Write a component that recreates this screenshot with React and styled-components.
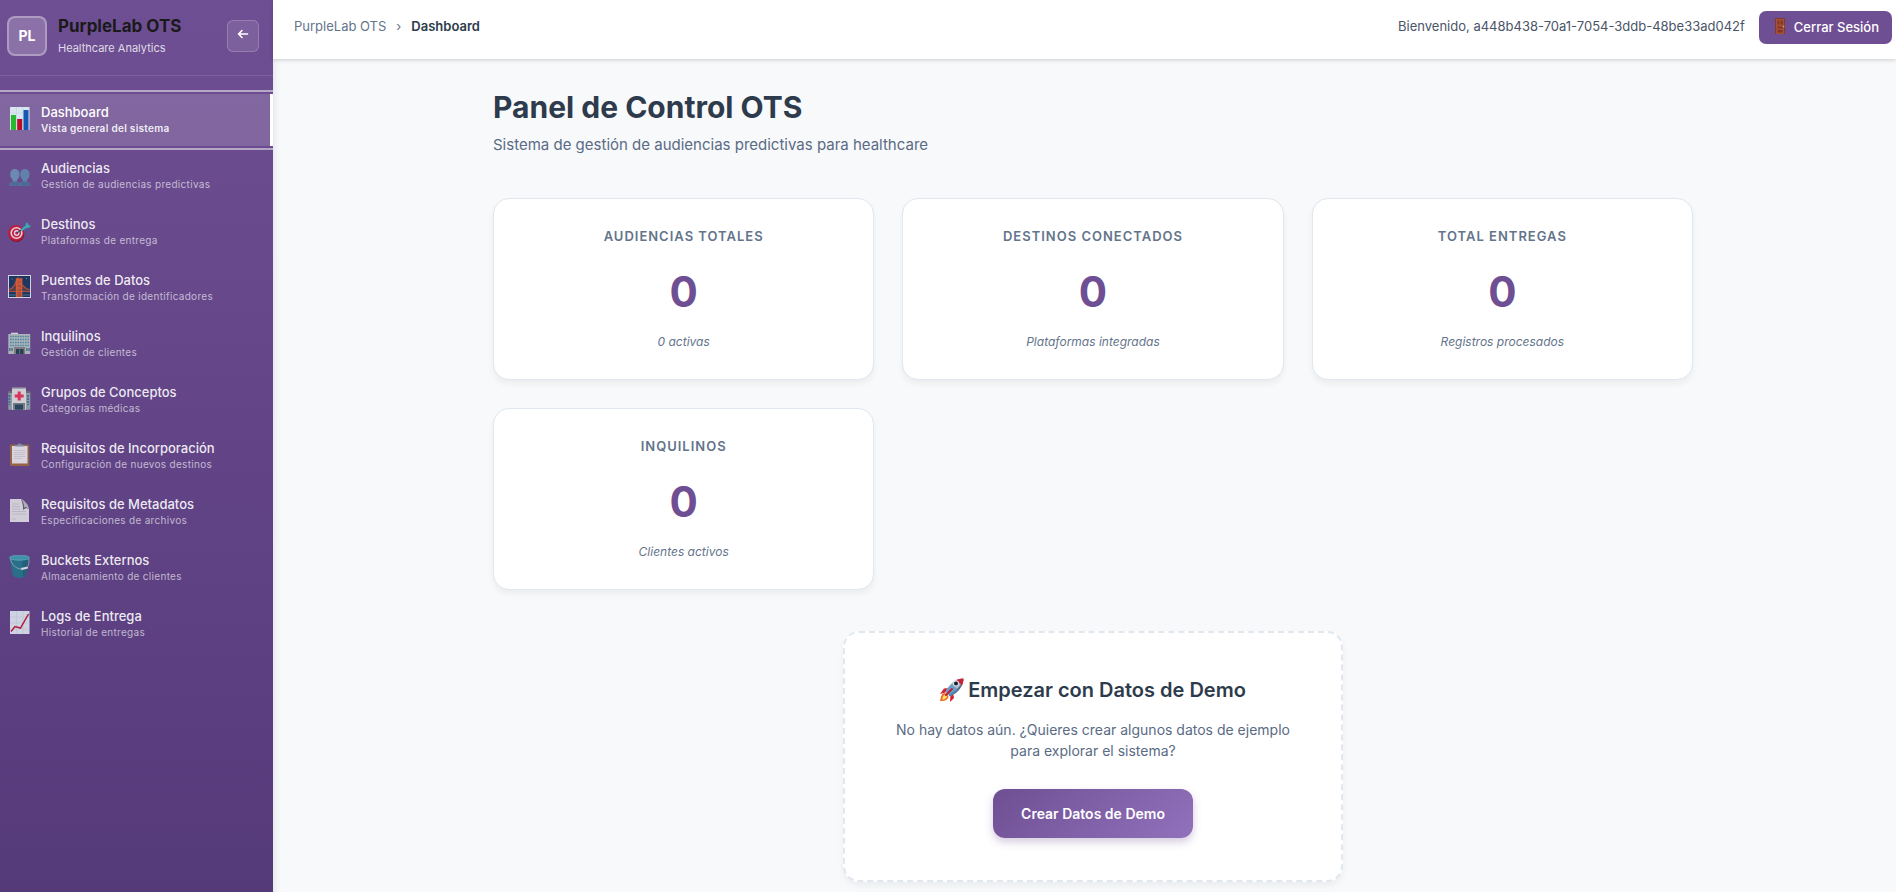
import React from 'react';
import styled, { createGlobalStyle, css } from 'styled-components';

const GlobalStyle = createGlobalStyle`
  *, *::before, *::after { box-sizing: border-box; }
  body {
    margin: 0;
    background: #f8f9fb;
    color: #2d3b4c;
    font-family: Inter, "Liberation Sans", sans-serif;
    font-size: 14px;
    line-height: 20px;
  }
  h1, h2, h3, p, ul, ol { margin: 0; padding: 0; }
  ul, ol { list-style: none; }
  button { font-family: inherit; cursor: pointer; }
`;

const Layout = styled.div`
  display: flex;
  min-height: 100vh;
`;

const Sidebar = styled.aside`
  display: flex;
  flex-direction: column;
  flex: 0 0 273px;
  overflow: hidden;
  background: linear-gradient(180deg, #6f4f93 0%, #553a7a 100%);
  color: #fff;
`;

const SidebarHeader = styled.div`
  display: flex;
  align-items: center;
  height: 76px;
  padding: 0 14px 4px 7px;
  border-bottom: 1px solid rgba(255, 255, 255, 0.12);
`;

const Logo = styled.div`
  display: grid;
  place-items: center;
  width: 40px;
  height: 40px;
  border: 2px solid rgba(255, 255, 255, 0.3);
  border-radius: 8px;
  background: rgba(255, 255, 255, 0.2);
  font-weight: 700;
`;

const Brand = styled.div`
  flex: 1;
  padding-left: 11px;
`;

const BrandName = styled.h2`
  color: #1a1a1a;
  font-size: 17px;
  font-weight: 700;
  line-height: 24px;
`;

const BrandTagline = styled.p`
  color: rgba(255, 255, 255, 0.8);
  font-size: 11px;
  line-height: 20px;
`;

const CollapseButton = styled.button`
  display: grid;
  place-items: center;
  width: 32px;
  height: 32px;
  padding: 0 0 3px;
  border: 1px solid rgba(255, 255, 255, 0.2);
  border-radius: 6px;
  background: rgba(255, 255, 255, 0.1);
  color: #fff;
`;

const NavList = styled.ul`
  display: flex;
  flex-direction: column;
  gap: 4px;
  padding-top: 18px;
`;

const NavLink = styled.a`
  display: flex;
  align-items: center;
  gap: 10px;
  height: 52px;
  padding-left: 7px;
  border-right: 3px solid transparent;
  color: rgba(255, 255, 255, 0.9);
  text-decoration: none;
  ${({ $active }) => $active && css`
    border-right-color: #fff;
    background: rgba(255, 255, 255, 0.15);
    color: #fff;
    outline: 2px solid rgba(255, 255, 255, 0.5);
    outline-offset: 2px;
  `}
`;

const NavIcon = styled.svg`
  flex: none;
  width: 24px;
  height: 26px;
  opacity: ${({ $active }) => ($active ? 1 : 0.9)};
`;

const NavText = styled.span`
  display: flex;
  flex-direction: column;
`;

const NavTitle = styled.span`
  font-size: 13px;
  font-weight: 500;
  line-height: 17px;
`;

const NavHint = styled.span`
  color: ${({ $active }) => ($active ? 'rgba(255, 255, 255, 0.9)' : 'rgba(255, 255, 255, 0.63)')};
  font-size: 10px;
  font-weight: ${({ $active }) => ($active ? 600 : 400)};
  letter-spacing: 0.3px;
  line-height: 15px;
`;

const Page = styled.div`
  display: flex;
  flex: 1;
  flex-direction: column;
  min-width: 0;
  box-shadow: inset 8px 0 8px -8px rgba(45, 55, 72, 0.15);
`;

const TopBar = styled.header`
  display: flex;
  align-items: flex-start;
  justify-content: space-between;
  padding: 11px 4px 15px 21px;
  background: #fff;
  box-shadow: 0 1px 4px rgba(0, 0, 0, 0.18);
  font-size: 13px;
  line-height: 31px;
`;

const Breadcrumb = styled.ol`
  display: flex;
  gap: 10px;
  color: #64748b;
`;

const CrumbLink = styled.a`
  color: inherit;
  text-decoration: none;
`;

const CurrentCrumb = styled.span`
  color: #2d3b4c;
  font-weight: 600;
`;

const UserArea = styled.div`
  display: flex;
  align-items: flex-start;
  gap: 14px;
  color: #4a5568;
`;

const LogoutButton = styled.button`
  display: flex;
  align-items: center;
  gap: 6px;
  height: 33px;
  padding: 0 13px 2px;
  border: 0;
  border-radius: 7px;
  background: #6f4f93;
  color: #fff;
  font-size: 13px;
  font-weight: 500;
`;

const Content = styled.main`
  padding: 28px 0 7px 17px;
`;

const Container = styled.div`
  max-width: 1200px;
  margin: 0 auto;
`;

const PageTitle = styled.h1`
  font-size: 30px;
  font-weight: 700;
  line-height: 40px;
`;

const PageSubtitle = styled.p`
  margin-top: 7px;
  color: #5a6b85;
  font-size: 15px;
  line-height: 22px;
`;

const StatGrid = styled.div`
  display: grid;
  grid-template-columns: repeat(auto-fit, minmax(300px, 1fr));
  gap: 28px;
  margin-top: 42px;
`;

const cardShadow = css`
  box-shadow: 0 4px 6px rgba(0, 0, 0, 0.05);
`;

const StatCard = styled.section`
  display: flex;
  flex-direction: column;
  align-items: center;
  padding: 28px;
  border: 1px solid #e0e7ef;
  border-radius: 16px;
  background: #fff;
  ${cardShadow}
`;

const StatLabel = styled.h3`
  color: #64748b;
  font-size: 13px;
  font-weight: 600;
  letter-spacing: 1px;
  line-height: 18px;
  text-transform: uppercase;
`;

const StatValue = styled.p`
  margin-top: 14px;
  color: #6f4f93;
  font-size: 42px;
  font-weight: 700;
  line-height: 66px;
`;

const StatNote = styled.p`
  margin-top: 8px;
  color: #64748b;
  font-size: 12px;
  font-style: italic;
  line-height: 18px;
`;

const DemoCard = styled.section`
  display: flex;
  flex-direction: column;
  align-items: center;
  max-width: 500px;
  margin: 41px auto 0;
  padding: 42px 40px;
  border: 2px dashed #e0e7ef;
  border-radius: 16px;
  background: #fff;
  text-align: center;
  ${cardShadow}
`;

const DemoTitle = styled.h2`
  display: flex;
  align-items: center;
  gap: 4px;
  font-size: 20px;
  font-weight: 600;
  line-height: 30px;
`;

const DemoText = styled.p`
  max-width: 400px;
  margin: 14px 0 28px;
  color: #5a6b85;
  line-height: 21px;
`;

const DemoButton = styled.button`
  height: 49px;
  padding: 0 28px;
  border: 0;
  border-radius: 12px;
  background: linear-gradient(135deg, #6f4f93 0%, #9171bb 100%);
  box-shadow: 0 4px 8px rgba(111, 79, 147, 0.3);
  color: #fff;
  font-size: 14px;
  font-weight: 600;
`;

const drawings = {
  bars: (
    <>
      <rect x="3" width="19.5" height="23" fill="#d9e6f0" />
      <path d="M3.4 6h18.6M3.4 12h18.6M3.4 18h18.6M9.5 0v23M16 0v23" stroke="#bccddd" strokeWidth=".5" />
      <rect x="4" y="8" width="5" height="15" fill="#27b832" />
      <rect x="10.2" y="12" width="5" height="11" fill="#b90f26" />
      <rect x="16.5" y="3" width="5" height="20" fill="#1457b4" />
    </>
  ),
  people: (
    <>
      <path d="M17.800 6c3 0 4.700 2.300 4.700 5.200 0 2.500-1.200 4.500-2.500 5.800v1.500c1.200 1 3.500 1 3.500 4.200H12.500c0-3.200 2.300-3.200 3.300-4.200V17c-1.400-1.300-2.600-3.300-2.600-5.800C13.200 8.300 14.800 6 17.800 6z" fill="#5f88ae" />
      <path d="M7.800 6c3 0 4.700 2.300 4.700 5.200 0 2.500-1.200 4.500-2.500 5.800v1.500c1.200 1 3.500 1 3.500 4.200H2c0-3.200 2.800-3.200 3.800-4.200V17c-1.400-1.300-2.600-3.300-2.600-5.800C3.200 8.300 4.800 6 7.800 6z" fill="#6a91b5" />
      <path d="M2 22.700c0-3.200 2.800-3.200 3.800-4.200h4.200c1.200 1 3.500 1 3.500 4.200zM14 22.700c0-2-.5-2.700 1.800-4.200H20c1.200 1 3.500 1 3.500 4.200z" fill="#43658c" opacity=".75" />
    </>
  ),
  target: (
    <>
      <ellipse cx="9.5" cy="15" rx="7.8" ry="8" fill="#8e0e25" />
      <circle cx="9" cy="14" r="7.9" fill="#ca1835" />
      <circle cx="9.5" cy="14" r="5.300" fill="none" stroke="#f3dfe6" strokeWidth="1.6" />
      <circle cx="9.7" cy="14" r="2.200" fill="none" stroke="#f3dfe6" strokeWidth="1.400" />
      <path d="M10 14l8-6" stroke="#234b6b" strokeWidth="1.2" />
      <path d="M13.5 10.5l5-4 .7-3.2 2 1.500.5 1.500 2.800.4-3 2.400-2.500.2-4.200 3.200z" fill="#35b4b7" />
    </>
  ),
  bridge: (
    <>
      <rect x="1.500" y=".5" width="22" height="22" fill="#17365c" stroke="#d9e1e9" />
      <circle cx="5" cy="4" r=".4" fill="#fff" /><circle cx="19.5" cy="3.5" r=".4" fill="#fff" /><circle cx="8" cy="6.5" r=".3" fill="#fff" />
      <path d="M2 15C7 13 9 8 11 3c2 6 5 10 12 12M2 16.500h21" fill="none" stroke="#bd5435" strokeWidth="1.200" />
      <path d="M4 14v3M6 12.500v4M8 10v7M17 11v6M19 13v4M21 14.500v3" stroke="#aa4b34" strokeWidth=".8" />
      <path d="M9.500 22V4h1.600v18M13 22V4h1.700v18M9.500 5h5M9.500 9h5M9.500 13h5" fill="none" stroke="#e15c2f" strokeWidth="1.400" />
      <path d="M2 20h7M16 20h7" stroke="#366382" strokeWidth="1.600" />
    </>
  ),
  office: (
    <>
      <path d="M4 1.700h7v1.500H4z" fill="#dce0df" />
      <path d="M1.300 3h21.900v20H1.300z" fill="#b3bfbf" />
      <path d="M3 5.500h19M3 8.500h19M3 11.500h19M3 14.500h19" stroke="#4f90a6" strokeWidth="1.700" strokeDasharray="1.700 .8" />
      <path d="M2 18.500h4M19 18.500h4" stroke="#45798d" strokeWidth="3" strokeDasharray="1.500 .8" />
      <path d="M7 16h11v7H7z" fill="#81827d" /><path d="M9 18h7.500v5H9z" fill="#263d4c" />
      <path d="M12.700 18v5" stroke="#5a9cb3" strokeWidth=".7" />
    </>
  ),
  hospital: (
    <>
      <path d="M1.300 5h22v17.700h-22z" fill="#90a4a9" /><path d="M1.300 4h4v2h-4M19 4h4v2h-4" fill="#6d6d70" />
      <path d="M5 .8h14v22H5z" fill="#dbdddd" /><path d="M5 .5h14v1.200H5z" fill="#969899" />
      <path d="M2.500 8v10M21 8v10" stroke="#3a7489" strokeWidth="1.800" strokeDasharray="2 1" />
      <path d="M10.700 4.500h3v3h3v3h-3v3h-3v-3h-3v-3h3z" fill="#e7335a" />
      <path d="M6 16h12v6.700H6z" fill="#777f83" /><path d="M8 17.500h8v5.200H8z" fill="#25485c" />
    </>
  ),
  clipboard: (
    <>
      <rect x="3" y="1.500" width="19.300" height="21.500" rx="1" fill="#9b673e" />
      <path d="M5 3h15.500v17.500H5z" fill="#e7e4e8" />
      <path d="M7 7.500h11M7 9.500h11M7 11.500h11M7 13.500h11M7 15.500h8" stroke="#cac7d0" strokeWidth=".8" />
      <path d="M8 3.500V2h2.500C11 0 14.500 0 15 2h2.500v1.500z" fill="#8793a5" />
    </>
  ),
  page: (
    <>
      <path d="M3 0h11l8 10v13H3z" fill="#dedce1" />
      <path d="M14 0l8 10c-2-1-4-1-6 1 .5-3-.5-7-2-11z" fill="#55525b" />
      <path d="M14 0c3 1 8 6 8 10-2-2-4-2-5-1.500C17 5 16 2 14 0z" fill="#bab7bf" />
      <path d="M5 5h7M5 7.500h8M5 10h8M5 12.500h14M5 15h14M5 20h4" stroke="#bfbcc5" strokeWidth=".8" />
    </>
  ),
  bucket: (
    <>
      <path d="M2.500 2.500h20l-3 17c-.5 4.500-13 4.500-13.700 0z" fill="#24748b" />
      <path d="M15 4h7l-3 16-3 2z" fill="#175465" opacity=".5" />
      <ellipse cx="12.500" cy="2.700" rx="10" ry="2.500" fill="#3d9baf" stroke="#69b8c4" strokeWidth=".7" />
      <path d="M3.500 4C5 12 12 15 17 14s5-6 5-10" fill="none" stroke="#9ab9c1" strokeWidth=".8" />
      <path d="M15 13.800l5-1" stroke="#e1e8e9" strokeWidth="2" strokeLinecap="round" />
    </>
  ),
  trend: (
    <>
      <rect x="3" width="19.500" height="23" fill="#dce3ec" />
      <path d="M3 6h19.500M3 12h19.500M3 18h19.500M9.500 0v23M16 0v23" stroke="#bccada" strokeWidth=".5" />
      <path d="M4 20.500l4-5 5.500 1.500L21.500 3" fill="none" stroke="#be1832" strokeWidth="1.500" />
    </>
  ),
};

function DoorIcon() {
  return (
    <svg width="16" height="17" viewBox="0 0 16 17" aria-hidden="true">
      <path d="M3 0h10v16H3z" fill="#823a2b" />
      <path d="M4 1h8v15H4z" fill="#a44f37" />
      <path d="M5.500 2.500h2v4h-2zM8.700 2.500h2v4h-2zM5.500 8.500h5v2h-5zM5.500 12h5v2.500h-5z" fill="#813626" />
      <circle cx="11.600" cy="8.500" r=".8" fill="#e4af55" />
    </svg>
  );
}

function RocketIcon() {
  return (
    <svg width="24" height="24" viewBox="0 0 24 24" aria-hidden="true">
      <path d="M8 10L4 10.500 0 16l7-2zM13 15l1 5-4 4 .500-8z" fill="#d7202f" />
      <path d="M5 15c-4 0-4 5-5 8 3 0 8 0 8.500-5z" fill="#ee6a24" />
      <path d="M6 16.500c-3 0-3 3-4 5 2 0 4-.500 5-3z" fill="#ffe067" />
      <path d="M23.500.5C16 .5 10 5 5.500 13.500l4.500 4.700C18 15 23.500 8 23.500.5z" fill="#a9bac9" />
      <path d="M23.500.5C22 7 16 13 8.500 16.700l1.500 1.500C18 15 23.500 8 23.500.5z" fill="#526c83" />
      <path d="M12 6l6 6c-2 2.500-5 4.500-8 6.200l-4.500-4.700C7 10.500 9.500 8 12 6z" fill="#4c91c6" opacity=".65" />
      <path d="M23.500.5c-2.500 0-5 .5-7 1.500l5.300 5.500c1-2 1.700-4.500 1.700-7z" fill="#c92335" />
      <circle cx="16" cy="5.500" r="3" fill="#d9e2e9" /><circle cx="16" cy="5.500" r="2" fill="#17202c" />
      <path d="M6 17l6-6" stroke="#bd1f32" strokeWidth="2" strokeLinecap="round" />
    </svg>
  );
}

const navItems = [
  ['bars', 'Dashboard', 'Vista general del sistema'],
  ['people', 'Audiencias', 'Gestión de audiencias predictivas'],
  ['target', 'Destinos', 'Plataformas de entrega'],
  ['bridge', 'Puentes de Datos', 'Transformación de identificadores'],
  ['office', 'Inquilinos', 'Gestión de clientes'],
  ['hospital', 'Grupos de Conceptos', 'Categorías médicas'],
  ['clipboard', 'Requisitos de Incorporación', 'Configuración de nuevos destinos'],
  ['page', 'Requisitos de Metadatos', 'Especificaciones de archivos'],
  ['bucket', 'Buckets Externos', 'Almacenamiento de clientes'],
  ['trend', 'Logs de Entrega', 'Historial de entregas'],
];

const stats = [
  ['Audiencias Totales', 0, '0 activas'],
  ['Destinos Conectados', 0, 'Plataformas integradas'],
  ['Total Entregas', 0, 'Registros procesados'],
  ['Inquilinos', 0, 'Clientes activos'],
];

export default function App() {
  return (
    <>
      <GlobalStyle />
      <Layout>
        <Sidebar>
          <SidebarHeader>
            <Logo>PL</Logo>
            <Brand>
              <BrandName>PurpleLab OTS</BrandName>
              <BrandTagline>Healthcare Analytics</BrandTagline>
            </Brand>
            <CollapseButton type="button" aria-label="Contraer menú">
              <svg width="12" height="10" viewBox="0 0 12 10" fill="none" stroke="currentColor" strokeWidth="1.600" strokeLinecap="round" strokeLinejoin="round">
                <path d="M10.500 5h-9M5 1.500L1.500 5 5 8.500" />
              </svg>
            </CollapseButton>
          </SidebarHeader>
          <nav>
            <NavList>
              {navItems.map(([icon, title, hint], i) => (
                <li key={title}>
                  <NavLink href="#" $active={i === 0} aria-current={i === 0 ? 'page' : undefined}>
                    <NavIcon viewBox="0 0 24 26" $active={i === 0} aria-hidden="true">{drawings[icon]}</NavIcon>
                    <NavText>
                      <NavTitle>{title}</NavTitle>
                      <NavHint $active={i === 0}>{hint}</NavHint>
                    </NavText>
                  </NavLink>
                </li>
              ))}
            </NavList>
          </nav>
        </Sidebar>
        <Page>
          <TopBar>
            <Breadcrumb>
              <li><CrumbLink href="#">PurpleLab OTS</CrumbLink></li>
              <li aria-hidden="true">›</li>
              <li><CurrentCrumb>Dashboard</CurrentCrumb></li>
            </Breadcrumb>
            <UserArea>
              <span>Bienvenido, a448b438-70a1-7054-3ddb-48be33ad042f</span>
              <LogoutButton type="button"><DoorIcon />Cerrar Sesión</LogoutButton>
            </UserArea>
          </TopBar>
          <Content>
            <Container>
              <PageTitle>Panel de Control OTS</PageTitle>
              <PageSubtitle>Sistema de gestión de audiencias predictivas para healthcare</PageSubtitle>
              <StatGrid>
                {stats.map(([label, value, note]) => (
                  <StatCard key={label}>
                    <StatLabel>{label}</StatLabel>
                    <StatValue>{value}</StatValue>
                    <StatNote>{note}</StatNote>
                  </StatCard>
                ))}
              </StatGrid>
              <DemoCard>
                <DemoTitle><RocketIcon />Empezar con Datos de Demo</DemoTitle>
                <DemoText>No hay datos aún. ¿Quieres crear algunos datos de ejemplo para explorar el sistema?</DemoText>
                <DemoButton type="button">Crear Datos de Demo</DemoButton>
              </DemoCard>
            </Container>
          </Content>
        </Page>
      </Layout>
    </>
  );
}
